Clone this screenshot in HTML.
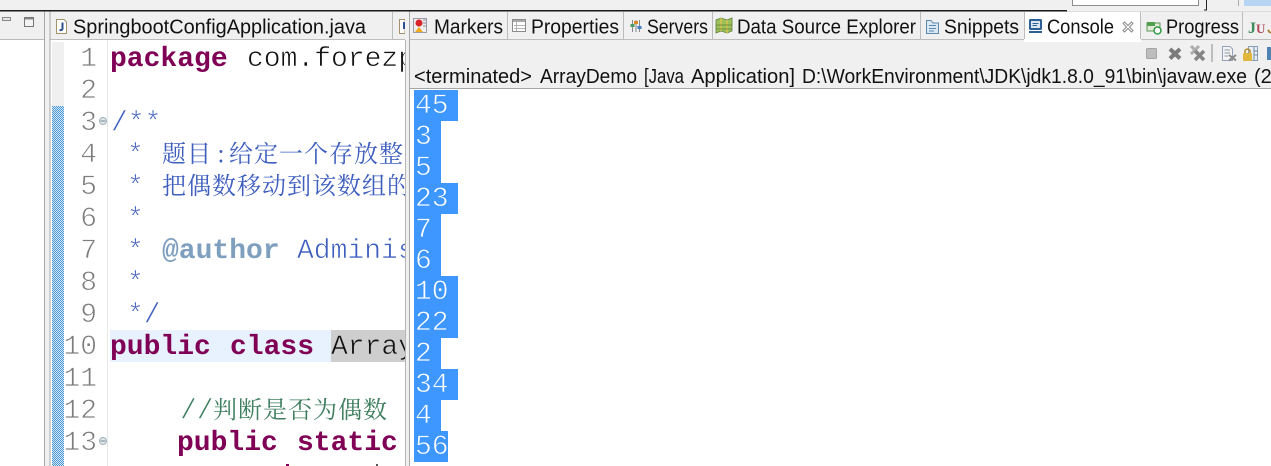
<!DOCTYPE html>
<html><head><meta charset="utf-8"><style>
html,body{margin:0;padding:0;width:1271px;height:466px;overflow:hidden;background:#fff}
svg{display:block}
.t{font:20px "Liberation Sans","Noto Sans CJK SC",sans-serif;fill:#111}
.c{font:28px "Liberation Mono",monospace;}
.k{font-weight:bold;fill:#7f0055}
.n{fill:#7d7d7d;font:28px "Liberation Mono",monospace;stroke:#fff;stroke-width:.7px}
.d{fill:#3f5fbf;stroke:#fff;stroke-width:.6px}
.b{fill:#111;stroke:#fff;stroke-width:.6px}
.z{font:24px "Noto Serif CJK SC","Noto Sans CJK SC",serif;fill:#3f5fbf}
.o{font:28px "Liberation Mono",monospace;fill:#fff;stroke:#3e97ff;stroke-width:.7px}
</style></head><body>
<svg width="1271" height="466" viewBox="0 0 1271 466" xmlns="http://www.w3.org/2000/svg">
<defs>
<pattern id="h" width="2" height="2" patternUnits="userSpaceOnUse"><rect width="2" height="2" fill="#d2e6f6"/><rect width="1" height="1" fill="#4b98d6"/><rect x="1" y="1" width="1" height="1" fill="#4b98d6"/></pattern>
<clipPath id="ed"><rect x="50" y="40" width="355" height="426"/></clipPath>
<clipPath id="cn"><rect x="411" y="40" width="860" height="426"/></clipPath>
</defs>
<!-- top strip -->
<rect width="1271" height="466" fill="#fff"/>
<rect width="1271" height="11" fill="#f0f0f0"/>
<rect y="0" x="1072" width="127" height="5" fill="#fff"/>
<path d="M1072.500 0V5.500H1198.500V0" fill="none" stroke="#8d8d8d"/>
<rect x="1244" y="0" width="27" height="6" fill="#b6d5f2"/>
<rect x="1206" y="0" width="1" height="10" fill="#222"/>
<rect x="1204" y="9.500" width="3" height="1" fill="#222"/>
<rect x="1238" y="0" width="1" height="6" fill="#aaa"/>
<rect x="0" y="10" width="1067" height="1.500" fill="#1a1a1a"/>
<rect x="1067" y="11" width="204" height="1" fill="#c8c8c8"/>
<!-- left view -->
<rect x="0" y="11.500" width="44" height="27.500" fill="#f0f0f0"/>
<rect x="0" y="39" width="45" height="1" fill="#bbb"/>
<rect x="44" y="11" width="1" height="455" fill="#a8a8a8"/>
<rect x="45" y="11.500" width="5" height="455" fill="#f0f0f0"/>
<rect x="2.500" y="17.500" width="8" height="3" fill="#e4e4e4" stroke="#8a8a8a"/>
<rect x="24.500" y="17.500" width="9" height="9" fill="#f4f4f4" stroke="#777"/>
<rect x="25" y="18" width="8" height="1.500" fill="#888"/>
<!-- editor tabs -->
<rect x="50" y="11.500" width="355" height="27.500" fill="#f0f0f0"/>
<rect x="50" y="39" width="355" height="1" fill="#bcbcbc"/>
<rect x="392" y="12" width="1" height="27" fill="#bdbdbd"/>
<rect x="49.500" y="11" width="1" height="455" fill="#a8a8a8"/>
<path d="M56.500 19.500H64L66.500 22V33.500H56.500Z" fill="#fff" stroke="#a3926b"/>
<path d="M62.500 22.500V28.500Q62.500 30.500 59.500 30" fill="none" stroke="#2c4f8f" stroke-width="2"/>
<path d="M399.500 19.500H405V33.500H399.500Z" fill="#fff" stroke="#a3926b"/>
<path d="M404 22V29" fill="none" stroke="#2c4f8f" stroke-width="2"/>
<text class="t" x="73" y="33.500" textLength="293" lengthAdjust="spacingAndGlyphs">SpringbootConfigApplication.java</text>
<!-- gutter -->
<rect x="52" y="42" width="12" height="64" fill="#f0f0f0"/>
<rect x="52" y="106" width="12" height="360" fill="url(#h)"/>
<rect x="107" y="40" width="1" height="426" fill="#e8e8e8"/>
<!-- current line highlight -->
<rect x="110" y="330" width="221" height="32" fill="#e8f2fe"/>
<rect x="331" y="330" width="74" height="32" fill="#cecece"/>
<g text-anchor="end">
<text x="97" y="66" class="n">1</text><text x="97" y="98" class="n">2</text><text x="97" y="130" class="n">3</text>
<text x="97" y="162" class="n">4</text><text x="97" y="194" class="n">5</text><text x="97" y="226" class="n">6</text>
<text x="97" y="258" class="n">7</text><text x="97" y="290" class="n">8</text><text x="97" y="322" class="n">9</text>
<text x="97" y="354" class="n">10</text><text x="97" y="386" class="n">11</text><text x="97" y="418" class="n">12</text><text x="97" y="450" class="n">13</text>
</g>
<g fill="#e6e6e6" stroke="#9fb3bd"><circle cx="103" cy="121" r="3.500"/><circle cx="103" cy="441" r="3.500"/></g>
<path d="M100.500 121H105.500M100.500 441H105.500" stroke="#6f8893"/>
<g clip-path="url(#ed)">
<text class="c k" x="110" y="66">package</text>
<text class="c b" x="247" y="66">com.forezp</text>
<text class="c d" x="111" y="130">/**</text>
<text class="c d" x="127" y="162">*</text>
<text class="z" x="162 187 217 229 254 279 304 329 354 379 404" y="162">题目:给定一个存放整数</text>
<text class="c d" x="127" y="194">*</text>
<text class="z" x="162" y="194" letter-spacing="1">把偶数移动到该数组的</text>
<text class="c d" x="127" y="226">*</text>
<text class="c d" x="127" y="258">*</text>
<text class="c" x="162" y="258" style="font-weight:bold;fill:#7f9fbf">@author</text>
<text class="c d" x="297" y="258">Administrator</text>
<text class="c d" x="127" y="290">*</text>
<text class="c d" x="127" y="322">*/</text>
<text class="c k" x="110" y="354">public</text>
<text class="c k" x="230" y="354">class</text>
<text class="c" x="331" y="354" style="fill:#111;stroke:#cecece;stroke-width:.6px">ArrayDemo</text>
<text class="c" x="180" y="418" style="fill:#3f7f5f;stroke:#fff;stroke-width:.6px">//</text>
<text class="z" x="213" y="418" style="fill:#3f7f5f" letter-spacing="1">判断是否为偶数</text>
<text class="c k" x="177" y="450">public</text>
<text class="c k" x="297" y="450">static</text>
</g>
<rect x="286" y="464" width="3" height="2" fill="#7f0055"/>
<rect x="376" y="464" width="2" height="2" fill="#555"/>
<!-- sash -->
<rect x="405" y="11.500" width="5" height="455" fill="#f0f0f0"/>
<rect x="405" y="40" width="1" height="426" fill="#b5b5b5"/>
<rect x="409" y="11" width="1" height="455" fill="#a8a8a8"/>
<!-- console tabs -->
<rect x="410" y="11.500" width="861" height="27.500" fill="#f0f0f0"/>
<rect x="0" y="10" width="1067" height="1.500" fill="#1a1a1a"/>
<rect x="410" y="39" width="861" height="1" fill="#bcbcbc"/>
<rect x="1024" y="12" width="117" height="28" fill="#fff"/>
<path d="M507.500 12V39M623.500 12V39M712.500 12V39M920.500 12V39M1024.500 12V39M1140.500 12V39M1242.500 12V39" stroke="#bcbcbc" fill="none"/>
<text class="t" x="434" y="33.500" textLength="69" lengthAdjust="spacingAndGlyphs">Markers</text>
<text class="t" x="531" y="33.500" textLength="88" lengthAdjust="spacingAndGlyphs">Properties</text>
<text class="t" x="647" y="33.500" textLength="61" lengthAdjust="spacingAndGlyphs">Servers</text>
<text class="t" x="737" y="33.500" textLength="179" lengthAdjust="spacingAndGlyphs">Data Source Explorer</text>
<text class="t" x="944" y="33.500" textLength="75" lengthAdjust="spacingAndGlyphs">Snippets</text>
<text class="t" x="1047" y="33.500" textLength="67" lengthAdjust="spacingAndGlyphs">Console</text>
<text class="t" x="1166" y="33.500" textLength="73" lengthAdjust="spacingAndGlyphs">Progress</text>
<!-- markers icon -->
<rect x="413.500" y="18.500" width="13" height="14" fill="#eee" stroke="#9a9aa8"/>
<circle cx="419" cy="23" r="3.500" fill="#d8232a"/>
<path d="M415 32L419 27L423 32Z" fill="#f2a91e"/>
<path d="M423 20H426M423 23H426M423 26H426" stroke="#8c8ca0"/>
<!-- properties icon -->
<rect x="512.500" y="19.500" width="13" height="12" fill="#fff" stroke="#8b8b8b"/>
<rect x="513" y="20" width="12" height="2" fill="#a9a9a9"/>
<path d="M516.500 22V31M514 25.500H525M514 28.500H525" stroke="#b5b5b5"/>
<!-- servers icon -->
<path d="M632.500 20V32M636 20V32M639.500 20V32" stroke="#888"/>
<rect x="630.500" y="24" width="4" height="3" fill="#4b9a5e"/><rect x="634" y="21" width="4" height="3" fill="#d98a2b"/><rect x="637.500" y="26" width="4" height="3" fill="#3f7fc2"/>
<!-- data source icon -->
<path d="M716 20L721 18L727 20L732 18V31L727 33L721 31L716 33Z" fill="#9cc05a" stroke="#5f7f38" stroke-width=".8"/>
<path d="M721 18V31M727 20V33" stroke="#d8c24a" stroke-width="1.500"/>
<path d="M716.500 25H732M716.500 29H732" stroke="#5f7f38" stroke-width=".8"/>
<!-- snippets icon -->
<path d="M926.500 20.500H931L933 23H938.500V33.500H926.500Z" fill="#d8e8f4" stroke="#5d89ad"/>
<path d="M929 25.500H936M929 28.500H936M929 31H934" stroke="#5d89ad"/>
<!-- console icon -->
<rect x="1029" y="19" width="13" height="11" rx="1.500" fill="#2d5f96"/>
<rect x="1031" y="21" width="9" height="7" fill="#d9e6f2"/>
<path d="M1032.500 23.500H1038.500M1032.500 25.500H1037" stroke="#2d5f96"/>
<rect x="1029" y="31" width="13" height="2" fill="#2d5f96"/>
<!-- close -->
<path d="M1124.500 22L1128 25.500L1131.500 22L1133 23.500L1129.500 27L1133 30.500L1131.500 32L1128 28.500L1124.500 32L1123 30.500L1126.500 27L1123 23.500Z" fill="#fff" stroke="#8c8c8c"/>
<!-- progress icon -->
<rect x="1147" y="23" width="13" height="8" fill="#dfe9d3" stroke="#5a9a5a"/>
<rect x="1147" y="22" width="8" height="4" fill="#4fa14f"/>
<circle cx="1157.500" cy="30.500" r="3.500" fill="#fff" stroke="#2f9a43" stroke-width="1.500"/>
<!-- junit -->
<text x="1248" y="33" font-family="Liberation Serif,serif" font-size="16" font-weight="bold" fill="#3d8a5a">J</text>
<text x="1256" y="33" font-family="Liberation Serif,serif" font-size="13" font-weight="bold" fill="#b04a5c">U</text>
<text x="1267" y="33.500" class="t" style="fill:#a87a30">J</text>
<!-- console toolbar -->
<rect x="410" y="40" width="861" height="48" fill="#f0f0f0"/>
<rect x="410" y="88" width="861" height="1" fill="#a5a5a5"/>
<rect x="1024" y="39" width="117" height="3" fill="#fff"/>
<rect x="1146.500" y="48.500" width="10" height="10" rx="1" fill="#bdbdbd" stroke="#a4a4a4"/>
<path d="M1170 49L1180 58.500M1180 49L1170 58.500" stroke="#7b7b7b" stroke-width="4"/>
<path d="M1191 46L1199 54M1199 46L1191 54" stroke="#adadad" stroke-width="3"/>
<path d="M1195 51L1204 60M1204 51L1195 60" stroke="#858585" stroke-width="3.500"/>
<rect x="1211.500" y="44" width="1" height="18" fill="#8a8a8a"/>
<path d="M1222.500 46.500H1230L1232.500 49V60.500H1222.500Z" fill="#f4f4f4" stroke="#93a3b5"/>
<path d="M1224.500 50H1230M1224.500 53H1230M1224.500 56H1228" stroke="#8897a8"/>
<path d="M1229 55L1236 60.500M1236 55L1229 60.500" stroke="#888" stroke-width="2"/>
<rect x="1248.500" y="46.500" width="9" height="14" fill="#e8eef5" stroke="#8ba0b5"/>
<path d="M1254 47V60M1254 51H1258M1254 55H1258" stroke="#6f87a0"/>
<rect x="1243" y="53" width="9" height="8" rx="1" fill="#e0b63c"/>
<path d="M1245 53V50.500Q1247.500 47.500 1250 50.500V53" fill="none" stroke="#b08a28" stroke-width="1.500"/>
<rect x="1267" y="47" width="4" height="13" fill="#4f83b5"/>
<text class="t" x="414" y="83" textLength="118" lengthAdjust="spacingAndGlyphs">&lt;terminated&gt;</text>
<text class="t" x="540" y="83" textLength="97" lengthAdjust="spacingAndGlyphs">ArrayDemo</text>
<text class="t" x="644" y="83" textLength="40" lengthAdjust="spacingAndGlyphs">[Java</text>
<text class="t" x="691" y="83" textLength="104" lengthAdjust="spacingAndGlyphs">Application]</text>
<text class="t" x="802" y="83" textLength="445" lengthAdjust="spacingAndGlyphs">D:\WorkEnvironment\JDK\jdk1.8.0_91\bin\javaw.exe</text>
<text class="t" x="1254" y="83">(2</text>
<!-- console output -->
<rect x="410" y="89" width="861" height="377" fill="#fff"/>
<g fill="#3e97ff">
<rect x="414" y="90" width="44" height="31"/><rect x="414" y="121" width="27" height="31"/><rect x="414" y="152" width="27" height="31"/>
<rect x="414" y="183" width="44" height="31"/><rect x="414" y="214" width="27" height="31"/><rect x="414" y="245" width="27" height="31"/>
<rect x="414" y="276" width="44" height="31"/><rect x="414" y="307" width="44" height="31"/><rect x="414" y="338" width="27" height="31"/>
<rect x="414" y="369" width="44" height="31"/><rect x="414" y="400" width="27" height="31"/><rect x="414" y="431" width="34" height="31"/>
</g>
<g clip-path="url(#cn)">
<text class="o" x="415" y="113">45</text><text class="o" x="415" y="144">3</text><text class="o" x="415" y="175">5</text>
<text class="o" x="415" y="206">23</text><text class="o" x="415" y="237">7</text><text class="o" x="415" y="268">6</text>
<text class="o" x="415" y="299">10</text><text class="o" x="415" y="330">22</text><text class="o" x="415" y="361">2</text>
<text class="o" x="415" y="392">34</text><text class="o" x="415" y="423">4</text><text class="o" x="415" y="454">56</text>
</g>
</svg>
</body></html>
